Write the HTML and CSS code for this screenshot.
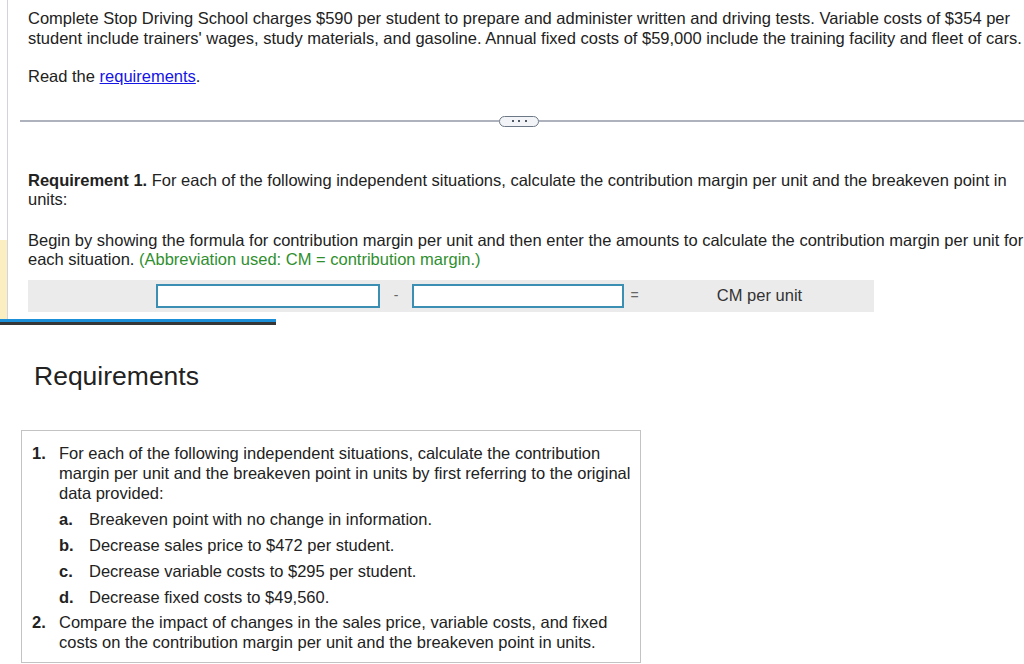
FILE: index.html
```html
<!DOCTYPE html>
<html lang="en">
<head>
<meta charset="utf-8">
<title>Complete Stop Driving School</title>
<link rel="stylesheet" href="styles.css">
</head>
<body>
<div class="top">
  <div class="gutter"><div class="gutter-mark"></div></div>
  <div class="question">
    <p class="intro">Complete Stop Driving School charges $590 per student to prepare and administer written and driving tests. Variable costs of $354 per student include trainers' wages, study materials, and gasoline. Annual fixed costs of $59,000 include the training facility and fleet of cars.</p>
    <p class="read">Read the <a href="#" class="link">requirements</a>.</p>
    <div class="divider">
      <span class="rule rule-left"></span>
      <span class="more"><i></i><i></i><i></i></span>
      <span class="rule rule-right"></span>
    </div>
    <p class="req-title"><b>Requirement 1.</b> For each of the following independent situations, calculate the contribution margin per unit and the breakeven point in units:</p>
    <p class="instruction">Begin by showing the formula for contribution margin per unit and then enter the amounts to calculate the contribution margin per unit for each situation. <span class="note">(Abbreviation used: CM = contribution margin.)</span></p>
    <div class="formula">
      <div class="cell cell-first"><span class="input input-a"></span></div>
      <div class="cell op op-minus">-</div>
      <div class="cell"><span class="input input-b"></span></div>
      <div class="cell op op-eq">=</div>
      <div class="cell label">CM per unit</div>
    </div>
  </div>
</div>
<div class="splitter"></div>
<section class="requirements">
  <h2 class="req-heading">Requirements</h2>
  <div class="req-box">
    <ol class="main-list">
      <li class="main-item">
        <span class="num">1.</span>
        <div class="item-body">For each of the following independent situations, calculate the contribution margin per unit and the breakeven point in units by first referring to the original data provided:
          <ol class="sub-list">
            <li class="sub-item"><span class="sub-num">a.</span><span>Breakeven point with no change in information.</span></li>
            <li class="sub-item"><span class="sub-num">b.</span><span>Decrease sales price to $472 per student.</span></li>
            <li class="sub-item"><span class="sub-num">c.</span><span>Decrease variable costs to $295 per student.</span></li>
            <li class="sub-item"><span class="sub-num">d.</span><span>Decrease fixed costs to $49,560.</span></li>
          </ol>
        </div>
      </li>
      <li class="main-item item-two">
        <span class="num">2.</span>
        <div class="item-body">Compare the impact of changes in the sales price, variable costs, and fixed costs on the contribution margin per unit and the breakeven point in units.</div>
      </li>
    </ol>
  </div>
</section>
</body>
</html>
```

FILE: styles.css
```css
html, body {
  margin: 0;
  padding: 0;
  background: #ffffff;
}

body {
  font-family: "Liberation Sans", Arial, sans-serif;
  font-size: 16.5px;
  color: #222222;
  width: 1024px;
  height: 664px;
  overflow: hidden;
}

p {
  margin: 0;
}

.top {
  display: flex;
}

.gutter {
  width: 7px;
  display: flex;
  flex-direction: column;
}

.gutter-mark {
  margin-top: 240px;
  flex: 1;
  background: #fbefc2;
}

.question {
  flex: 1;
  border-left: 1px solid #d3d3dd;
  padding: 9px 0 7px 20px;
  line-height: 19.5px;
}

.read {
  margin-top: 18.5px;
}

.link {
  color: #1515e6;
  text-decoration: underline;
}

.divider {
  margin: 29px 0 0 -8px;
  height: 12px;
  display: flex;
  align-items: center;
}

.rule {
  height: 2px;
  background: #adb2bd;
}

.rule-left {
  width: 479px;
}

.rule-right {
  flex: 1;
}

.more {
  width: 38px;
  height: 9px;
  border: 1.5px solid #6c7886;
  border-radius: 7px;
  background: #f3f4f7;
  display: flex;
  align-items: center;
  justify-content: center;
  gap: 4.5px;
}

.more i {
  width: 2px;
  height: 2px;
  background: #4f5863;
}

.req-title {
  margin-top: 43.5px;
}

.instruction {
  margin-top: 21px;
}

.note {
  color: #2f8f2f;
}

.formula {
  margin-top: 10px;
  width: 846px;
  height: 32px;
  background: #ebebeb;
  display: flex;
  align-items: center;
}

.cell {
  display: flex;
  align-items: center;
}

.cell-first {
  padding-left: 128px;
}

.input {
  display: block;
  height: 24px;
  box-sizing: border-box;
  border: 2px solid #3a8fb3;
  background: #ffffff;
}

.input-a {
  width: 224px;
}

.input-b {
  width: 212px;
}

.op {
  justify-content: center;
  color: #666666;
  font-size: 14px;
}

.op-minus {
  width: 32px;
}

.op-eq {
  width: 21px;
}

.label {
  flex: 1;
  justify-content: center;
  color: #333333;
}

.splitter {
  width: 276px;
  height: 3px;
  background: #1c8fd9;
  border-bottom: 3px solid #363636;
}

.requirements {
  padding-left: 21px;
}

.req-heading {
  margin: 36px 0 0 13px;
  font-size: 26.5px;
  font-weight: normal;
  line-height: 30px;
  color: #222222;
}

.req-box {
  margin-top: 39px;
  border: 1px solid #c3c3c3;
  padding: 12.5px 0 10px 10px;
  box-sizing: border-box;
  width: 620px;
}

.main-list, .sub-list {
  list-style: none;
  margin: 0;
  padding: 0;
}

.main-item {
  display: flex;
  line-height: 20px;
}

.item-two {
  margin-top: 5px;
}

.num {
  width: 27px;
  flex: none;
  font-weight: bold;
}

.item-body {
  width: 575px;
}

.sub-item {
  display: flex;
  margin-top: 6px;
}

.sub-num {
  width: 30px;
  flex: none;
  font-weight: bold;
}
```
